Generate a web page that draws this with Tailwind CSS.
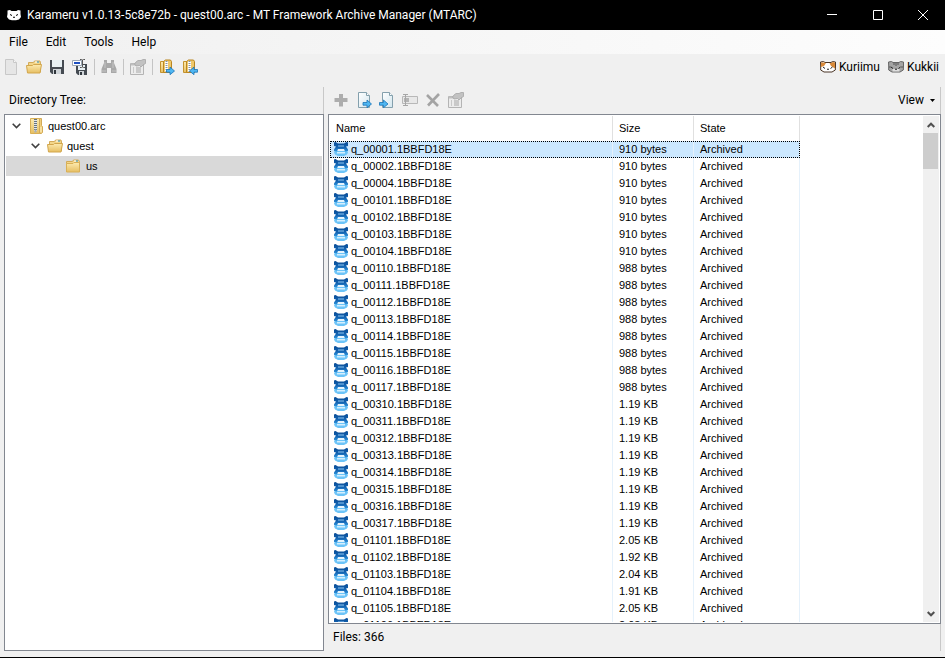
<!DOCTYPE html>
<html lang="en">
<head>
    <meta charset="UTF-8">
    <meta name="viewport" content="width=device-width, initial-scale=1.0">
    <title>Karameru</title>
    <script src="https://cdn.jsdelivr.net/npm/@tailwindcss/browser@4"></script>
</head>
<body class="h-screen flex flex-col bg-[#f0f0f0] border-b border-black overflow-hidden text-xs text-black cursor-default font-[Roboto,'Open_Sans',sans-serif]">
    <!-- Shared icons -->
    <svg class="absolute size-0" aria-hidden="true">
        <defs>
            <linearGradient id="gold" x1="0" y1="0" x2="0" y2="1"><stop offset="0" stop-color="#fdebb0"/><stop offset="1" stop-color="#e6be62"/></linearGradient>
            <linearGradient id="paper" x1="0" y1="0" x2="1" y2="1"><stop offset="0" stop-color="#ffffff"/><stop offset="1" stop-color="#d3e6ee"/></linearGradient>
            <linearGradient id="drum" x1="0" y1="0" x2="0" y2="1"><stop offset="0" stop-color="#084a94"/><stop offset="0.6" stop-color="#1566b4"/><stop offset="1" stop-color="#2f95dd"/></linearGradient>
        </defs>
        <symbol id="folder-open" viewBox="0 0 16 16">
            <path d="M2.5 13V3.500h5l1-1.500h5.500l.5 2v9z" fill="#f3d68a" stroke="#d2aa58"/>
            <path d="M9 3h2" stroke="#fff"/><path d="M11 3h2" stroke="#2a9bd8"/>
            <path d="M.5 6.500h6l1-1h8L14 14H1.500z" fill="url(#gold)" stroke="#d2a64c"/>
        </symbol>
        <symbol id="folder" viewBox="0 0 16 16">
            <path d="M1.500 13.500v-10h6l1-1.500h5l1 1.500v10z" fill="#f3d68a" stroke="#d2aa58"/>
            <path d="M9 3h2" stroke="#fff"/><path d="M11 3h2" stroke="#2a9bd8"/>
            <path d="M1.500 5.500H8l1-1h5.500v9.500h-13z" fill="url(#gold)" stroke="#d9b056"/>
        </symbol>
        <symbol id="archive" viewBox="0 0 16 16">
            <path d="M1.500.5h9v15h-9z" fill="url(#gold)" stroke="#d9b056"/>
            <path d="M10.500.5h2v7l1 1v6l-1 1h-2z" fill="#efcd7c" stroke="#d2aa58"/>
            <path d="M12 9v5" stroke="#fff3c8"/>
            <path d="M6.500 1v12" stroke="#e4e6e8" stroke-width="3"/>
            <path d="M6.500 1v11" stroke="#68737e" stroke-width="3" stroke-dasharray="1 1"/>
            <path d="M5.500 11.500h2v3h-2z" fill="#a8b0b6"/>
        </symbol>
        <symbol id="zip-base" viewBox="0 0 16 16">
            <path d="M1.500 2.500h5v11h-5z" fill="url(#gold)" stroke="#c4932e"/>
            <path d="M4.500 2.500l2-1.500h5l1 1.500v11h-8z" fill="#f0c869" stroke="#b98622"/>
            <path d="M7.500 2v11" stroke="#fff" stroke-width="3"/><path d="M7.500 2v11" stroke="#8a929a" stroke-width="2" stroke-dasharray="1 1"/>
        </symbol>
        <symbol id="zip-out" viewBox="0 0 16 16">
            <use href="#zip-base"/>
            <path d="M7.500 10.500h3.500V8l4.500 4-4.500 3.700v-2.500H7.500z" fill="#4fb7f2" stroke="#1b74b8" stroke-width=".8"/>
        </symbol>
        <symbol id="zip-in" viewBox="0 0 16 16">
            <use href="#zip-base"/>
            <path d="M15.500 10.500H12V8l-4.500 4 4.500 3.700v-2.500h3.500z" fill="#4fb7f2" stroke="#1b74b8" stroke-width=".8"/>
        </symbol>
        <symbol id="properties" viewBox="0 0 16 16">
            <path d="M.5 4.500h13v11H.5z" fill="#ececec" stroke="#b4b4b4"/>
            <path d="M1 5.500h12" stroke="#c0c0c0" stroke-width="2"/>
            <path d="M3 9h1M6 9h5M3 11h1M6 11h5M3 13h1M6 13h5" stroke="#a6a6a6"/>
            <path d="M6 3l2-1.500h3L13 .5h2.500v4L13 6l-2 2-1.500-1.500L6 7 4.500 5z" fill="#c2c2c2" stroke="#a6a6a6" stroke-width=".8"/>
        </symbol>
        <symbol id="drum-file" viewBox="0 0 14 14">
            <path d="M1 8.500h12l1 2-1 2-3 1.500H4l-3-1.500-1-2z" fill="#6cc4f8"/>
            <path d="M3 10h8v1.500H3z" fill="#d5effe"/>
            <path d="M2 4h10v5H2z" fill="#e6f4fd"/>
            <path d="M0 .5L1.500 0 4 1.500h6L12.500 0l1.500.5V4l-2 .5L13 6l1 1.500V9l-3 .5L10 7H4L3 9.500 0 9V7.500L1 6l1-1.500L0 4z" fill="url(#drum)"/>
            <path d="M4 3.500h6v1H4z" fill="#8cc6f0"/>
        </symbol>
    </svg>

    <header class="h-[30px] shrink-0 flex items-center bg-black text-white pl-[7px]">
        <svg class="w-[14px] h-[14px] mr-[6px]" viewBox="0 0 14 14">
            <path d="M.5 2.500L3 2l1.500 1h5L11 2l2.500.5V6l.5 3-2 2.500-3 .8H5l-3-.8L0 9l.5-3z" fill="#fff"/>
            <path d="M3 6.500l2 1M11 6.500l-2 1M6 9.500l1-.5 1 .5" stroke="#000" fill="none"/>
        </svg>
        <h1 class="flex-1 whitespace-nowrap">Karameru v1.0.13-5c8e72b - quest00.arc - MT Framework Archive Manager (MTARC)</h1>
        <button class="w-[46px] h-[30px] flex items-center justify-center" aria-label="Minimize"><svg class="w-[10px] h-[10px]" viewBox="0 0 10 10"><path d="M0 4.500h10" stroke="#fff"/></svg></button>
        <button class="w-[46px] h-[30px] flex items-center justify-center" aria-label="Maximize"><svg class="w-[10px] h-[10px]" viewBox="0 0 10 10"><path d="M.5.5h9v9h-9z" stroke="#fff" fill="none"/></svg></button>
        <button class="w-[44px] h-[30px] flex items-center justify-center" aria-label="Close"><svg class="w-[10px] h-[10px]" viewBox="0 0 10 10"><path d="M0 0l10 10M10 0L0 10" stroke="#fff"/></svg></button>
    </header>

    <nav class="h-6 shrink-0 flex items-center gap-[18px] px-[9px] bg-linear-to-r from-[#f0f0f0] to-[#fdfdfd]">
        <button>File</button>
        <button>Edit</button>
        <button>Tools</button>
        <button>Help</button>
    </nav>

    <div class="h-[26px] shrink-0 flex items-center pl-[3px] pr-[6px]">
        <div class="flex flex-1 items-center gap-[7px]">
            <button aria-label="New"><svg class="size-4" viewBox="0 0 16 16"><path d="M2.500.5h8l3 3v12h-11z" fill="#e6e6e6" stroke="#c8c8c8"/><path d="M10.500.5v3h3" fill="#f6f6f6" stroke="#c8c8c8"/></svg></button>
            <button aria-label="Open"><svg class="size-4"><use href="#folder-open"/></svg></button>
            <button aria-label="Save"><svg class="size-4" viewBox="0 0 16 16"><path d="M1 1h14v14H3l-2-2z" fill="#454b52"/><path d="M3 1h10v7H3z" fill="#e8f0f3"/><path d="M4 10h8v5H4z" fill="#cfd4d8"/><path d="M5 11h2v4H5z" fill="#30363c"/></svg></button>
            <button aria-label="Save as"><svg class="size-4" viewBox="0 0 16 16"><path d="M4 5h11v11H6l-2-2z" fill="#454b52"/><path d="M6 6h7v5H6z" fill="#e8f0f3"/><path d="M7 12h5v4H7z" fill="#cfd4d8"/><path d="M8 13h2v3H8z" fill="#30363c"/><path d="M.5 1.500h9v5h-9z" fill="#fff" stroke="#9aa6b4"/><path d="M2 3h6v2H2z" fill="#1d4fc0"/><path d="M8 .5h1.500l1 .5 1-.5H13M10.500 1v7M8 8.500h1.500l1-.5 1 .5H13" stroke="#555" fill="none"/></svg></button>
            <div class="w-px h-4 -mx-px bg-[#c4c4c4]"></div>
            <button aria-label="Find"><svg class="size-4" viewBox="0 0 16 16"><path d="M3 1h3v3h4V1h3v3l2.500 6v4H10V9H6v5H.5v-4L3 4z" fill="#a8a8a8"/><path d="M1 12h4M11 12h4M4 3v6M12 3v6" stroke="#c4c4c4"/></svg></button>
            <div class="w-px h-4 -mx-px bg-[#c4c4c4]"></div>
            <button aria-label="Properties"><svg class="size-4"><use href="#properties"/></svg></button>
            <div class="w-px h-4 -mx-px bg-[#c4c4c4]"></div>
            <button aria-label="Batch extract"><svg class="size-4"><use href="#zip-out"/></svg></button>
            <button aria-label="Batch import"><svg class="size-4"><use href="#zip-in"/></svg></button>
        </div>
        <button class="flex items-center gap-[3px] mr-[8px]">
            <svg class="size-4" viewBox="0 0 16 16"><path d="M.5 3l3-.5 1.500 1h6l1.500-1 3 .5v4l-.2 4-3.300 2H4L.7 11V7z" fill="#fff" stroke="#4a3526"/><path d="M1 3.500h3L6 4 4 7 1 8zM9.500 4h2l1-1 2.500.5v6L11 7z" fill="#d98a3a"/><path d="M3 8l2 1.500M12.500 8l-2 1.500M7 10.500l1-.5 1 .5" stroke="#222" fill="none"/></svg>
            Kuriimu
        </button>
        <button class="flex items-center gap-[3px]">
            <svg class="size-4" viewBox="0 0 16 16"><path d="M.5 3l3-.5 1.500 1h6l1.500-1 3 .5v4l-.2 4-3.300 2H4L.7 11V7z" fill="#a5a5a5" stroke="#666"/><path d="M6 4v2M8 4v3M10 4v2M1 8h2M13 8h2" stroke="#555"/><path d="M4.500 10h7v2.500h-7z" fill="#dedede"/><path d="M3 8l2 1.500M12.500 8l-2 1.500M7 10.500l1-.5 1 .5" stroke="#222" fill="none"/></svg>
            Kukkii
        </button>
    </div>

    <main class="flex-1 min-h-0 grid grid-cols-[320fr_613fr] gap-1 px-1 pb-[6px] pt-[7px]">
        <section class="flex flex-col min-h-0">
            <h2 class="h-[27px] shrink-0 flex items-center pl-[5px] pb-px border-r border-[#c8c8c8]">Directory Tree:</h2>
            <ul class="flex-1 min-h-0 border border-[#828790] bg-white p-px text-[11px] font-['Liberation_Sans',Arial,sans-serif]">
                <li class="h-5 flex items-center pl-[6px]">
                    <svg class="w-[9px] h-[6px] mr-[8px]" viewBox="0 0 9 6"><path d="M.7.700l3.800 3.800L8.300.7" stroke="#404040" stroke-width="1.600" fill="none"/></svg>
                    <svg class="size-4 mr-[3px]"><use href="#archive"/></svg>quest00.arc
                </li>
                <li class="h-5 flex items-center pl-[25px]">
                    <svg class="w-[9px] h-[6px] mr-[7px]" viewBox="0 0 9 6"><path d="M.7.700l3.800 3.800L8.300.7" stroke="#404040" stroke-width="1.600" fill="none"/></svg>
                    <svg class="size-4 mr-[4px]"><use href="#folder-open"/></svg>quest
                </li>
                <li class="h-5 flex items-center pl-[59px] bg-[#d9d9d9]">
                    <svg class="size-4 mr-[5px]"><use href="#folder"/></svg>us
                </li>
            </ul>
        </section>

        <section class="flex flex-col min-h-0 min-w-0">
            <div class="h-[27px] shrink-0 flex items-center pl-[5px] pr-[5px] pb-px border-r border-[#c8c8c8]">
                <div class="flex flex-1 items-center gap-[7px]">
                    <button aria-label="Add"><svg class="size-4" viewBox="0 0 16 16"><path d="M6 2h4v4h4.500v4H10v4.500H6V10H1.500V6H6z" fill="#adadad"/></svg></button>
                    <button aria-label="Extract"><svg class="size-4" viewBox="0 0 16 16"><path d="M2.500.5h8l3 3v12h-11z" fill="url(#paper)" stroke="#84a0ad"/><path d="M10.500.5v3h3" fill="#fff" stroke="#84a0ad"/><path d="M7 10.500h4V8l4.500 4-4.500 3.700v-2.500H7z" fill="#4fb7f2" stroke="#1b74b8" stroke-width=".8"/></svg></button>
                    <button aria-label="Replace"><svg class="size-4" viewBox="0 0 16 16"><path d="M3.500.5h7l3 3v12h-10z" fill="url(#paper)" stroke="#84a0ad"/><path d="M10.500.5v3h3" fill="#fff" stroke="#84a0ad"/><path d="M.5 10.500h4V8L9 12l-4.500 3.700v-2.500h-4z" fill="#4fb7f2" stroke="#1b74b8" stroke-width=".8"/></svg></button>
                    <button aria-label="Rename"><svg class="size-4" viewBox="0 0 16 16"><path d="M.5 4.500h15v7H.5z" fill="#e8e8e8" stroke="#b8b8b8"/><path d="M2 6h5v4H2z" fill="#b4b4b4"/><path d="M1 2.500h5M3.500 2.500v11M1 13.500h5" stroke="#a6a6a6"/></svg></button>
                    <button aria-label="Delete"><svg class="size-4" viewBox="0 0 16 16"><path d="M2 3l11 11M14 2L3 13.500" stroke="#a4a4a4" stroke-width="2.600"/></svg></button>
                    <button aria-label="File properties"><svg class="size-4"><use href="#properties"/></svg></button>
                </div>
                <button class="flex items-center gap-[6px]">View <svg class="w-[5px] h-[3px]" viewBox="0 0 5 3"><path d="M0 0h5L2.500 3z"/></svg></button>
            </div>
            <div class="flex-1 min-h-0 flex border border-[#828790] bg-white p-px text-[11px] font-['Liberation_Sans',Arial,sans-serif]">
                <div class="flex-1 min-w-0 overflow-hidden">
                    <table class="table-fixed border-separate border-spacing-0 w-[470px] text-left leading-[17px]">
                        <colgroup><col class="w-[283px]"><col class="w-[81px]"><col class="w-[106px]"></colgroup>
                        <thead>
                            <tr class="h-[25px]">
                                <th class="font-normal p-0 pl-[6px] border-r border-[#e0e0e0]">Name</th>
                                <th class="font-normal p-0 pl-[6px] border-r border-[#e0e0e0]">Size</th>
                                <th class="font-normal p-0 pl-[6px] border-r border-[#e0e0e0]">State</th>
                            </tr>
                        </thead>
                        <tbody id="files"></tbody>
                    </table>
                </div>
                <div class="w-4 shrink-0 flex flex-col bg-[#f0f0f0]">
                    <button class="h-[17px] shrink-0 flex items-center justify-center" aria-label="Scroll up"><svg class="w-[8px] h-[6px]" viewBox="0 0 8 6"><path d="M.7 5L4 1.700 7.300 5" stroke="#505050" stroke-width="2" fill="none"/></svg></button>
                    <div class="flex-1"><div class="h-9 w-[15px] bg-[#cdcdcd]"></div></div>
                    <button class="h-[17px] shrink-0 flex items-center justify-center" aria-label="Scroll down"><svg class="w-[8px] h-[6px]" viewBox="0 0 8 6"><path d="M.7 1L4 4.300 7.300 1" stroke="#505050" stroke-width="2" fill="none"/></svg></button>
                </div>
            </div>
            <footer class="h-[27px] shrink-0 flex items-center pl-[5px] pb-px border-r border-[#c8c8c8]">Files: 366</footer>
        </section>
    </main>

    <script>
        const files = [
            ['00001', '910 bytes'], ['00002', '910 bytes'], ['00004', '910 bytes'], ['00101', '910 bytes'],
            ['00102', '910 bytes'], ['00103', '910 bytes'], ['00104', '910 bytes'], ['00110', '988 bytes'],
            ['00111', '988 bytes'], ['00112', '988 bytes'], ['00113', '988 bytes'], ['00114', '988 bytes'],
            ['00115', '988 bytes'], ['00116', '988 bytes'], ['00117', '988 bytes'], ['00310', '1.19 KB'],
            ['00311', '1.19 KB'], ['00312', '1.19 KB'], ['00313', '1.19 KB'], ['00314', '1.19 KB'],
            ['00315', '1.19 KB'], ['00316', '1.19 KB'], ['00317', '1.19 KB'], ['01101', '2.05 KB'],
            ['01102', '1.92 KB'], ['01103', '2.04 KB'], ['01104', '1.91 KB'], ['01105', '2.05 KB'],
            ['01106', '2.03 KB'],
        ];

        // First row is the selected one
        document.getElementById('files').innerHTML = files.map(([id, size], i) => `
            <tr class="h-[17px] ${i === 0 ? 'bg-[#cce8ff] outline-1 outline-dotted -outline-offset-1 outline-black' : ''}">
                <td class="p-0 pl-1 border-r border-[#e5f1fb]"><div class="flex h-[17px] items-center gap-[3px]"><svg class="size-[14px] mb-px"><use href="#drum-file"/></svg>q_${id}.1BBFD18E</div></td>
                <td class="p-0 pl-[6px] border-r border-[#e5f1fb]">${size}</td>
                <td class="p-0 pl-[6px] border-r border-[#e5f1fb]">Archived</td>
            </tr>`).join('');
    </script>
</body>
</html>
